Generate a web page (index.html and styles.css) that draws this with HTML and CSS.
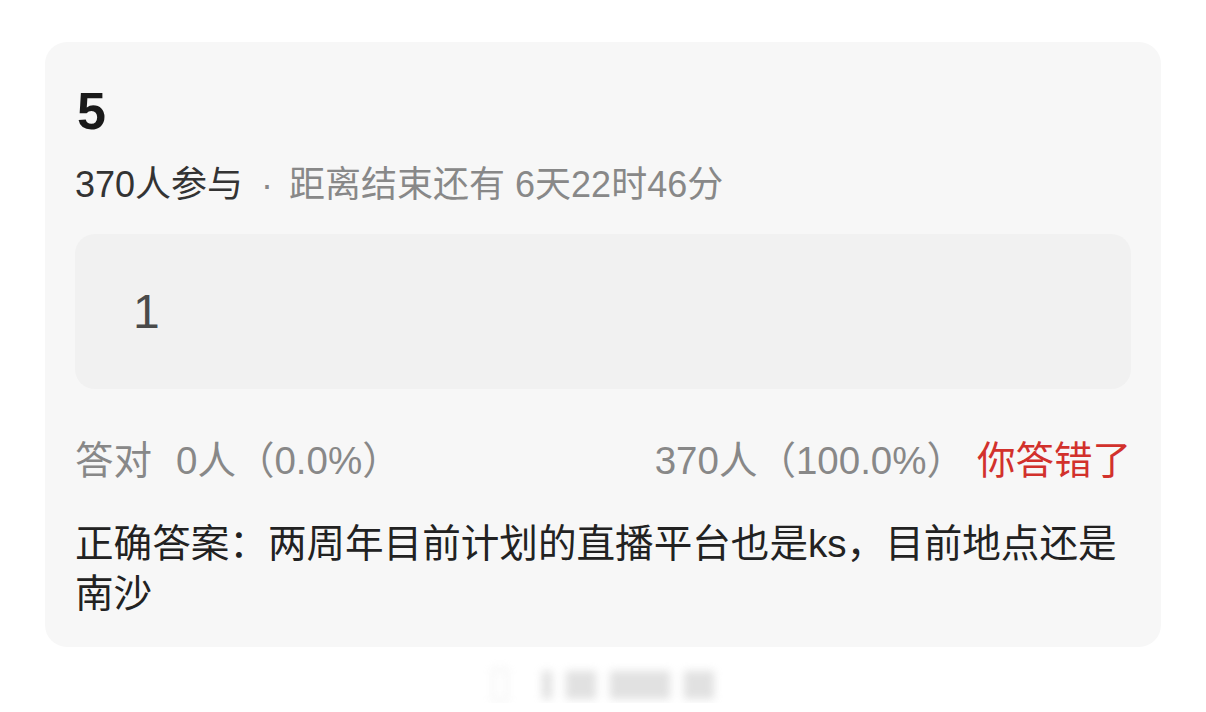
FILE: index.html
```html
<!DOCTYPE html>
<html lang="zh-CN">
<head>
    <meta charset="UTF-8">
    <meta name="viewport" content="width=device-width, initial-scale=1.0">
    <title>投票结果</title>
    <link rel="stylesheet" href="styles.css">
</head>
<body>
    <div class="card">
        <h2 class="title">5</h2>
        <p class="meta"><span class="joined">370人参与</span><span class="dot">·</span>距离结束还有 6天22时46分</p>

        <div class="option">1</div>

        <div class="stats">
            <span class="right-count"><span class="label">答对</span>0人（0.0%）</span>
            <span class="my-result">
                <span>370人（100.0%）</span>
                <span class="wrong">你答错了</span>
            </span>
        </div>

        <p class="answer">正确答案：两周年目前计划的直播平台也是ks，目前地点还是南沙</p>
    </div>

    <div class="watermark">
        <span class="wm-box"></span>
        <span class="wm-bar thin"></span>
        <span class="wm-bar"></span>
        <span class="wm-bar wide"></span>
        <span class="wm-bar"></span>
    </div>
</body>
</html>
```

FILE: styles.css
```css
body {
    margin: 0;
    background: #fff;
    font-family: "Liberation Sans", "Noto Sans CJK SC", sans-serif;
    color: #222;
}
.card {
    width: 1116px;
    box-sizing: border-box;
    margin: 42px auto 0;
    padding: 39px 30px 28px;
    background: #f7f7f7;
    border-radius: 22px;
}
.title {
    margin: 0;
    font-size: 52px;
    line-height: 60px;
    font-weight: bold;
    color: #1a1a1a;
    padding-left: 2px;
}
.meta {
    margin: 20px 0 0;
    font-size: 36px;
    line-height: 48px;
    color: #888;
}
.meta .joined {
    color: #333;
}
.meta .dot {
    margin: 0 16px 0 18px;
}
.option {
    margin-top: 25px;
    height: 155px;
    display: flex;
    align-items: center;
    padding-left: 58px;
    background: #f1f1f1;
    border-radius: 20px;
    font-size: 48px;
    color: #4a4a4a;
}
.stats {
    margin-top: 48px;
    display: flex;
    justify-content: space-between;
    font-size: 38.5px;
    line-height: 48px;
    color: #888;
}
.stats .label {
    margin-right: 24px;
}
.my-result {
    display: flex;
    gap: 12px;
}
.wrong {
    color: #d2312c;
}
.answer {
    margin: 34px 0 0;
    font-size: 38.6px;
    line-height: 50px;
    color: #222;
}
.watermark {
    display: flex;
    align-items: center;
    justify-content: center;
    gap: 14px;
    margin-top: 20px;
    height: 36px;
    filter: blur(4px);
    opacity: 0.35;
}
.wm-box {
    width: 12px;
    height: 30px;
    border: 2px solid #ccc;
    border-radius: 3px;
    margin-right: 20px;
}
.wm-bar {
    width: 30px;
    height: 28px;
    background: #aaa;
}
.wm-bar.thin {
    width: 10px;
}
.wm-bar.wide {
    width: 60px;
}
```
